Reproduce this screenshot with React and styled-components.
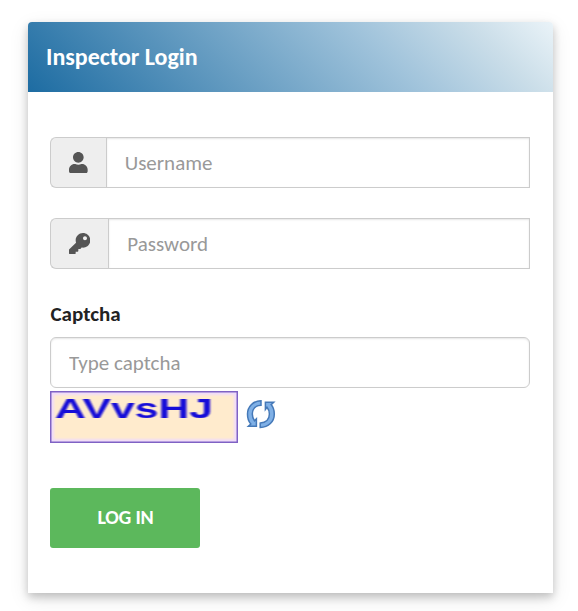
import styled, { createGlobalStyle } from 'styled-components';
import { FaUser, FaKey } from 'react-icons/fa';

const GlobalStyle = createGlobalStyle`
  * {
    box-sizing: border-box;
  }
  body {
    margin: 0;
    background: #fff;
    font-family: Calibri, Carlito, Lato, sans-serif;
    overflow: hidden;
  }
`
const Page = styled.main`
  padding: 22px 25px 18px 28px;
`
const Card = styled.section`
  height: 571px;
  border-radius: 4px 4px 0 0;
  background: #fff;
  box-shadow: 0 4px 8px rgba(0, 0, 0, 0.2), 0 6px 20px rgba(0, 0, 0, 0.1);
`
const CardHeader = styled.header`
  height: 70px;
  padding: 0 18px;
  display: flex;
  align-items: center;
  border-radius: 4px 4px 0 0;
  background: linear-gradient(45deg, #1d6ca2 0%, #a0c3db 66%, #cbdee9 86%, #eaf3f8 100%);
`
const Title = styled.h1`
  margin: 0;
  color: #fff;
  font-size: 24px;
  line-height: 30px;
  font-weight: 700;
`
const Form = styled.form`
  padding: 45px 23px 0 22px;
`
const InputGroup = styled.div`
  display: flex;
  height: 51px;
  margin-bottom: 30px;
`
const Addon = styled.span`
  display: flex;
  align-items: center;
  padding: 0 18px;
  border: 1px solid #ccc;
  border-right: 0;
  border-radius: 6px 0 0 6px;
  background: #eee;
  color: #555;
  font-size: 21.33px;
  svg {
    width: ${props => props.$narrow ? '0.875em' : '1em'};
  }
`
const Input = styled.input`
  flex: 1;
  width: 100%;
  min-width: 0;
  height: 51px;
  padding: 0 18px;
  border: 1px solid #ccc;
  border-radius: ${props => props.$rounded ? '6px' : '0'};
  box-shadow: inset 0 1px 2px rgba(0, 0, 0, 0.1);
  background: #fff;
  color: #555;
  font-family: inherit;
  font-size: 21px;
  outline: none;
  &::placeholder {
    color: #999;
    opacity: 1;
  }
`
const Label = styled.label`
  display: block;
  height: 38px;
  padding-left: 0.5px;
  line-height: 30px;
  color: #222;
  font-size: 21px;
  font-weight: 700;
`
const CaptchaRow = styled.div`
  display: flex;
  align-items: flex-start;
  gap: 8px;
  margin: 3px 0 45px;
`
const CaptchaImage = styled.svg`
  display: block;
  width: 188px;
  height: 52px;
`
const Refresh = styled.button`
  margin: 8px 0 0;
  padding: 0;
  border: 0;
  background: none;
  cursor: pointer;
  svg {
    display: block;
  }
`
const LoginButton = styled.button`
  display: block;
  width: 150px;
  height: 60px;
  padding: 0 0 2px 1px;
  border: 0;
  border-radius: 3px;
  background: #5cb85c;
  color: #fff;
  font-family: inherit;
  font-size: 20px;
  font-weight: 700;
  letter-spacing: -0.2px;
  cursor: pointer;
`

const Captcha = () => (
  <CaptchaImage viewBox="0 0 188 52">
    <defs>
      <filter id="soft">
        <feGaussianBlur stdDeviation="0.9 0.5" />
      </filter>
      <filter id="halo">
        <feGaussianBlur stdDeviation="1" />
      </filter>
    </defs>
    <rect width="188" height="52" fill="#ffebcd" />
    <rect x="1.5" y="1.5" width="185" height="49" fill="none" stroke="#f0dcfa" strokeWidth="5" filter="url(#halo)" />
    <rect x="0.75" y="0.75" width="186.5" height="50.5" fill="none" stroke="#7f62c4" strokeWidth="1.5" />
    <text
      x="5"
      y="26.5"
      textLength="158"
      lengthAdjust="spacingAndGlyphs"
      fontFamily="Liberation Sans, Arial, sans-serif"
      fontSize="27"
      fontWeight="700"
      fill="#1509d8"
      filter="url(#soft)"
    >
      AVvsHJ
    </text>
  </CaptchaImage>
)

const RefreshIcon = () => (
  <svg width="30" height="30" viewBox="0 0 30 30" fill="#7fb0e6" stroke="#4579b8" strokeWidth="1.5">
    <path d="M15 1.8 V6.2 C9.5 6.5 6.3 10 6.3 15 C6.3 18 7.3 20 8.5 21.8 L10.4 19.8 V27.2 H2.4 L4.8 25 C2.4 22.4 1.5 19 1.5 15 C1.5 7.7 7 1.8 15 1.8 Z" />
    <path d="M14.2 28.5 V24.1 C19.8 23.7 23.4 20.3 23.4 15 C23.4 12 22.4 10 21 8.3 L19.4 10.5 V3.2 H27.7 L25.1 5.6 C27.3 8.2 28.3 11.4 28.3 15 C28.3 22.8 22.6 28.2 14.2 28.5 Z" />
  </svg>
)

const App = () => {
  return (
    <>
      <GlobalStyle />
      <Page>
        <Card>
          <CardHeader>
            <Title>Inspector Login</Title>
          </CardHeader>
          <Form onSubmit={e => e.preventDefault()}>
            <InputGroup>
              <Addon $narrow><FaUser /></Addon>
              <Input type="text" placeholder="Username" />
            </InputGroup>
            <InputGroup>
              <Addon><FaKey /></Addon>
              <Input type="password" placeholder="Password" />
            </InputGroup>
            <Label htmlFor="captcha">Captcha</Label>
            <Input id="captcha" type="text" placeholder="Type captcha" $rounded />
            <CaptchaRow>
              <Captcha />
              <Refresh type="button" aria-label="Refresh captcha">
                <RefreshIcon />
              </Refresh>
            </CaptchaRow>
            <LoginButton type="submit">LOG IN</LoginButton>
          </Form>
        </Card>
      </Page>
    </>
  )
}
export default App;
